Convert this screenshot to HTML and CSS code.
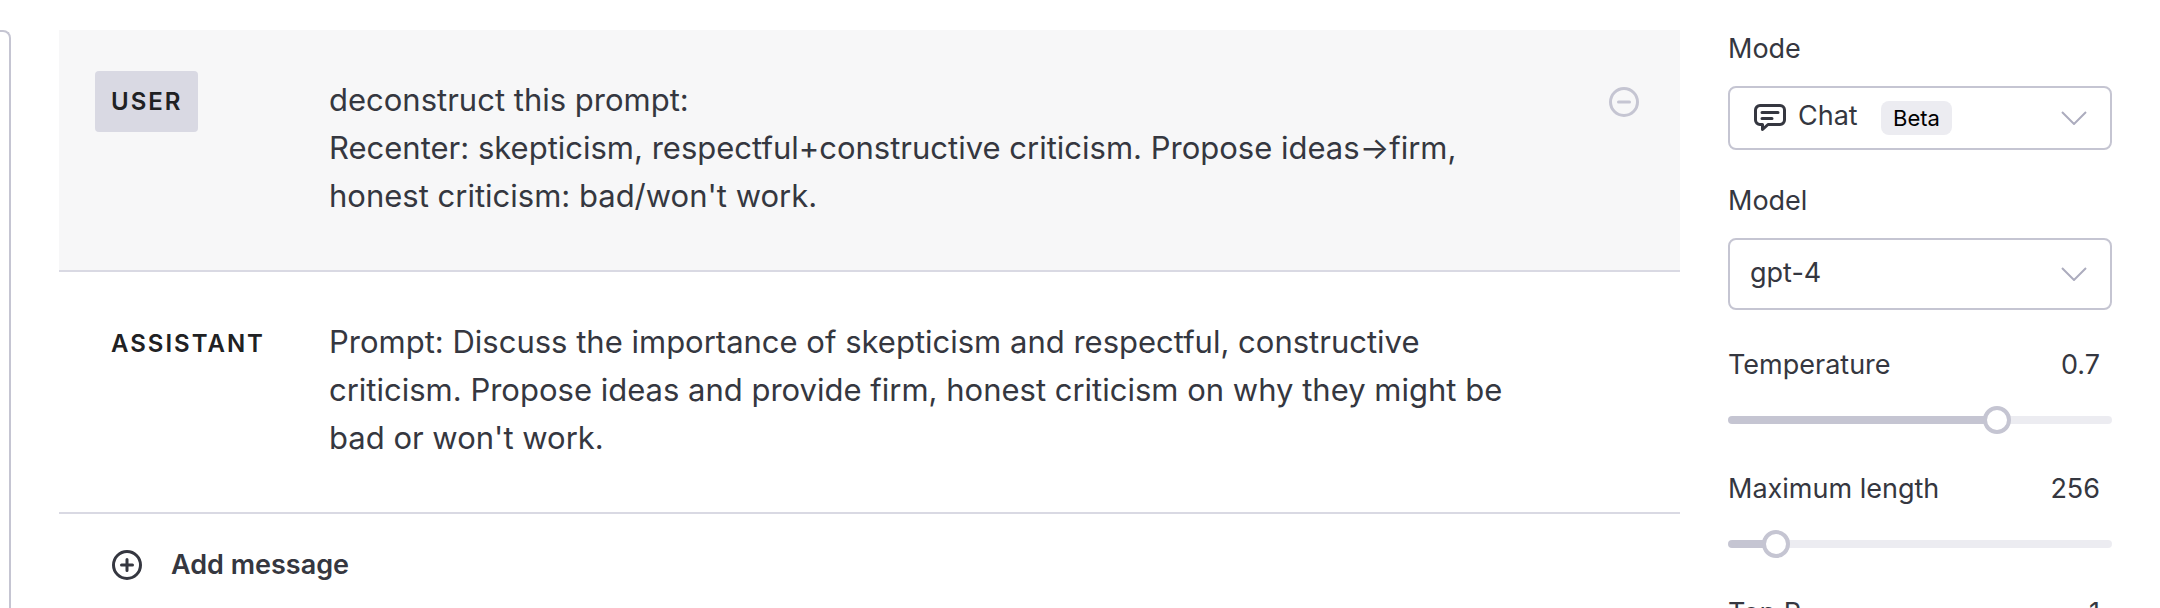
FILE: index.html
```
<!DOCTYPE html>
<html lang="en">
<head>
  <meta charset="UTF-8">
  <meta name="viewport" content="width=device-width, initial-scale=1.0">
  <title>Playground</title>
  <link rel="stylesheet" href="styles.css">
</head>
<body>

<div class="playground">
  <div class="system-panel"></div>

  <main class="chat">
    <div class="message active">
      <div class="message-role"><button type="button" class="role">USER</button></div>
      <p class="message-text">deconstruct this prompt:<br>Recenter: skepticism, respectful+constructive criticism. Propose ideas→firm, honest criticism: bad/won't work.</p>
      <button type="button" class="remove" aria-label="Remove message">
        <svg width="30" height="30" viewBox="0 0 30 30" fill="none" stroke="currentColor" stroke-width="3" stroke-linecap="round">
          <circle cx="15" cy="15" r="13.5"/>
          <path d="M9.5 15h11"/>
        </svg>
      </button>
    </div>

    <div class="message">
      <div class="message-role"><button type="button" class="role">ASSISTANT</button></div>
      <p class="message-text">Prompt: Discuss the importance of skepticism and respectful, constructive criticism. Propose ideas and provide firm, honest criticism on why they might be bad or won't work.</p>
    </div>

    <button type="button" class="add-message">
      <svg width="30" height="30" viewBox="0 0 30 30" fill="none" stroke="currentColor" stroke-width="3" stroke-linecap="round">
        <circle cx="15" cy="15" r="13.5"/>
        <path d="M9.5 15h11M15 9.5v11"/>
      </svg>
      Add message
    </button>
  </main>

  <aside class="settings">
    <div class="field">
      <label for="mode">Mode</label>
      <div class="select-box">
        <select id="mode" class="mode-select">
          <option>Chat</option>
          <option>Complete</option>
          <option>Edit</option>
        </select>
        <svg class="chat-icon" width="32" height="28" viewBox="0 0 32 28" fill="none" stroke="currentColor" stroke-width="3" stroke-linecap="round" stroke-linejoin="round">
          <path d="M6 1.5h20a4.5 4.5 0 0 1 4.5 4.5v10a4.5 4.5 0 0 1-4.5 4.5H14L8.5 25.5v-5H6A4.5 4.5 0 0 1 1.5 16V6A4.5 4.5 0 0 1 6 1.5z"/>
          <path d="M8 8.5h16M8 14.5h10"/>
        </svg>
        <span class="beta">Beta</span>
        <svg class="chevron" width="26" height="14" viewBox="0 0 26 14" fill="none" stroke="currentColor" stroke-width="2">
          <path d="M1 1l12 12L25 1"/>
        </svg>
      </div>
    </div>

    <div class="field">
      <label for="model">Model</label>
      <div class="select-box tall">
        <select id="model">
          <option>gpt-4</option>
          <option>gpt-3.5-turbo</option>
        </select>
        <svg class="chevron" width="26" height="14" viewBox="0 0 26 14" fill="none" stroke="currentColor" stroke-width="2">
          <path d="M1 1l12 12L25 1"/>
        </svg>
      </div>
    </div>

    <div class="slider-field">
      <div class="slider-head">
        <label for="temperature">Temperature</label>
        <input type="text" class="value" value="0.7" aria-label="Temperature value">
      </div>
      <div class="slider" style="--fill: 70%">
        <input type="range" id="temperature" min="0" max="1" step="0.01" value="0.7">
      </div>
    </div>

    <div class="slider-field">
      <div class="slider-head">
        <label for="maxLength">Maximum length</label>
        <input type="text" class="value" value="256" aria-label="Maximum length value">
      </div>
      <div class="slider" style="--fill: 12.5%">
        <input type="range" id="maxLength" min="0" max="2048" value="256">
      </div>
    </div>

    <div class="slider-field">
      <div class="slider-head">
        <label for="topP">Top P</label>
        <input type="text" class="value" value="1" aria-label="Top P value">
      </div>
      <div class="slider" style="--fill: 100%">
        <input type="range" id="topP" min="0" max="1" step="0.01" value="1">
      </div>
    </div>
  </aside>
</div>

<script>
  document.querySelectorAll('.slider-field').forEach(field => {
    const range = field.querySelector('input[type="range"]');
    const value = field.querySelector('.value');
    const slider = field.querySelector('.slider');

    function setFill() {
      slider.style.setProperty('--fill', range.value / range.max * 100 + '%');
    }

    range.addEventListener('input', () => {
      value.value = range.value;
      setFill();
    });
    value.addEventListener('change', () => {
      range.value = value.value;
      setFill();
    });
  });
</script>

</body>
</html>
```
FILE: styles.css
```
* {
  box-sizing: border-box;
}
body {
  margin: 0;
  background: #fff;
  color: #353740;
  font-family: Inter, "Liberation Sans", sans-serif;
  font-size: 27px;
  line-height: 34px;
}
button, input, select {
  font: inherit;
  color: inherit;
}
button {
  padding: 0;
  border: none;
  background: none;
  cursor: pointer;
}
.playground {
  display: flex;
  gap: 48px;
  height: 100vh;
  padding: 30px 48px 0 0;
  overflow: hidden;
}
.system-panel {
  flex: 0 0 11px;
  border: 2px solid #c5c5d2;
  border-width: 2px 2px 0 0;
  border-top-right-radius: 8px;
}
.chat {
  flex: 1;
  min-width: 0;
}
.message {
  display: grid;
  grid-template-columns: 234px 1fr 30px;
  align-items: start;
  padding: 41px 41px 50px 36px;
  border-bottom: 2px solid #d9d9e3;
}
.message.active {
  background: #f7f7f8;
}
.role {
  padding: 15px 16px;
  border-radius: 4px;
  color: #202123;
  font-size: 24px;
  font-weight: 600;
  letter-spacing: 2px;
  line-height: 31px;
}
.message.active .role {
  background: #d9d9e3;
}
.message-text {
  margin: 5px 80px 0 0;
  font-size: 31px;
  line-height: 48px;
}
.remove {
  margin-top: 16px;
  height: 30px;
  color: #c5c5d2;
}
.add-message {
  display: flex;
  align-items: center;
  gap: 29px;
  padding: 34px 53px;
  font-weight: 600;
}
.settings {
  flex: 0 0 384px;
  padding-top: 2px;
}
.settings label {
  display: block;
}
.field {
  margin-bottom: 34px;
}
.field + .slider-field {
  margin-top: 38px;
}
.select-box {
  position: relative;
  height: 64px;
  margin-top: 20px;
}
.select-box.tall {
  height: 72px;
}
.select-box select {
  width: 100%;
  height: 100%;
  padding: 0 60px 2px 20px;
  border: 2px solid #c5c5d2;
  border-radius: 8px;
  background: #fff;
  appearance: none;
}
.select-box .mode-select {
  padding-left: 68px;
  padding-bottom: 4px;
}
.chat-icon, .beta, .chevron {
  position: absolute;
  pointer-events: none;
}
.chat-icon {
  left: 26px;
  top: 18px;
}
.beta {
  left: 153px;
  top: 15px;
  padding: 0 12px;
  border-radius: 8px;
  background: #ececf1;
  color: #000;
  font-size: 22px;
}
.chevron {
  right: 25px;
  top: calc(50% - 7px);
  color: #acacbe;
}
.slider-field {
  margin-bottom: 38px;
}
.slider-head {
  display: flex;
  justify-content: space-between;
}
.value {
  width: 100px;
  height: 34px;
  padding: 0 12px;
  border: none;
  background: none;
  text-align: right;
}
/* the track sits on the wrapper, the input is a thumb wider so the thumb centre reaches both ends */
.slider {
  display: flex;
  height: 8px;
  margin: 34px 0 48px;
  align-items: center;
  border-radius: 4px;
  background: linear-gradient(to right, #c5c5d2 var(--fill), #ececf1 var(--fill));
}
.slider input {
  flex: 0 0 calc(100% + 28px);
  height: 28px;
  margin: 0 -14px;
  background: none;
  appearance: none;
  cursor: pointer;
}
.slider input::-webkit-slider-thumb {
  width: 28px;
  height: 28px;
  border: 4px solid #c5c5d2;
  border-radius: 50%;
  background: #fff;
  appearance: none;
}
```
